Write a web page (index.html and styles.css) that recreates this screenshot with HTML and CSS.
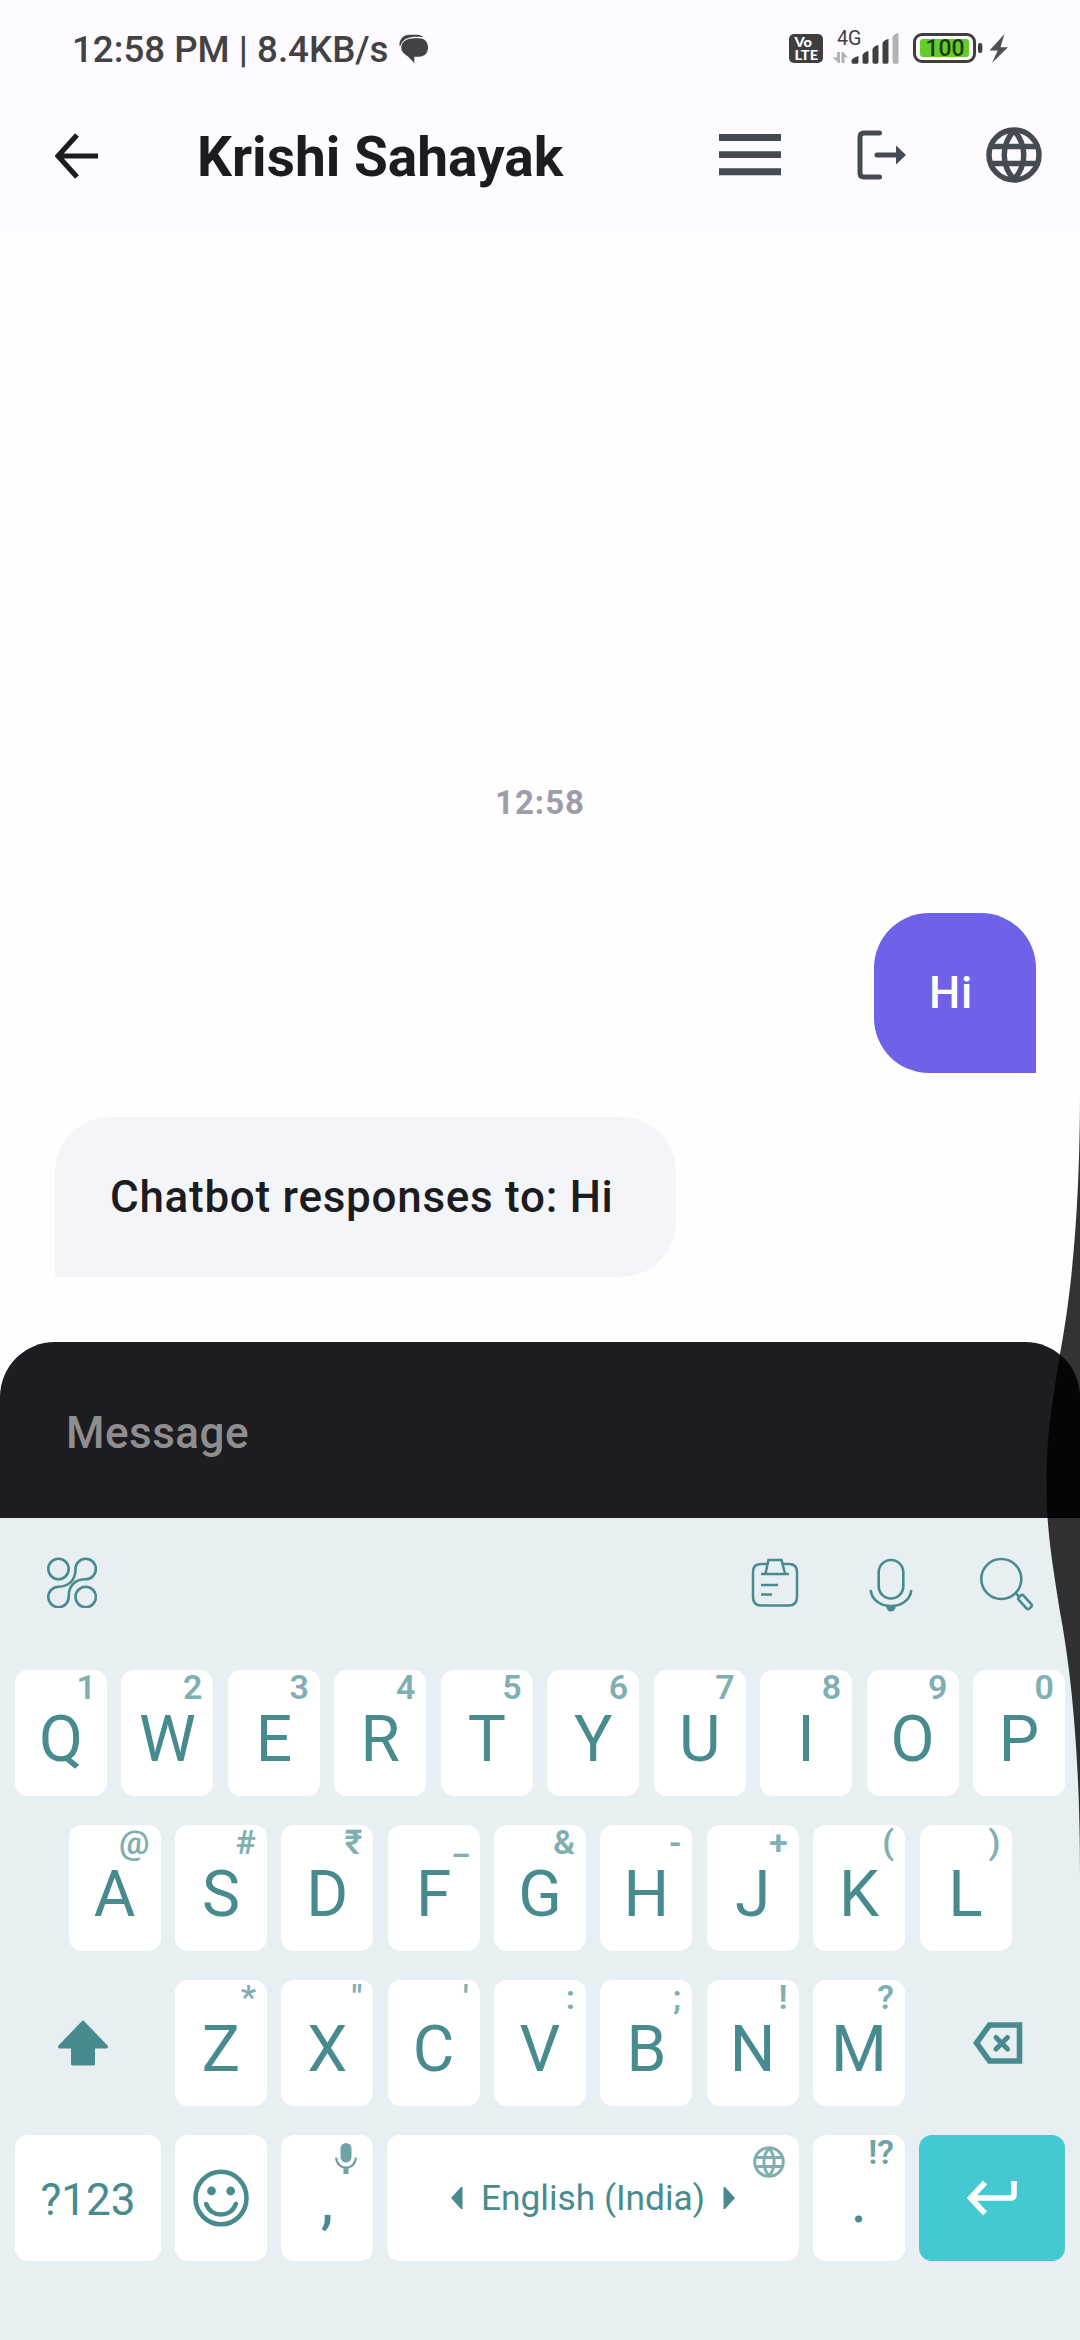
FILE: index.html
```html
<!DOCTYPE html>
<html lang="en">
<head>
<meta charset="utf-8">
<title>Krishi Sahayak</title>
<link rel="stylesheet" href="styles.css">
</head>
<body>
<div class="screen">
  <header class="top">
    <div class="status">
      <span class="status-text">12:58 PM | 8.4KB/s</span>
      <svg class="status-chat" width="30" height="30" viewBox="0 0 30 30"><path fill="#424242" d="M15.500 4.200H20C26 4.200 29 8.500 29 13.500 29 19 25.500 22.800 20 22.800H15.300V29L9 22.500C5 20 2.300 17.500 2.300 13.500 2.300 7.500 8 4.200 15.500 4.200Z"/><path fill="#424242" d="M0.500 12C0 7 3 .8 10.500 .8H18c3 0 5 1 6.500 2.500C14 2 4.500 3 1.600 11.500Z"/></svg>
      <svg class="status-icons" width="240" height="60" viewBox="0 0 240 60">
        <rect x="9" y="14" width="34" height="29" rx="5" fill="#3f3f3f"/>
        <text x="14.500" y="27.300" class="volte" textLength="17.500" lengthAdjust="spacingAndGlyphs">Vo</text>
        <text x="14.500" y="39.800" class="volte" textLength="23.500" lengthAdjust="spacingAndGlyphs">LTE</text>
        <text x="57" y="25" class="net" textLength="24.500" lengthAdjust="spacingAndGlyphs">4G</text>
        <path fill="#b3b1b4" d="M57 32h3v11h-1.500L52.500 37.500h4.500zM61.500 43V32h1.500l5 5.500h-3.500V43z"/>
        <path fill="#3f3f3f" d="M71.500 41c0-2 3-4 7-5v6q0 1.800-1.500 1.800h-4q-1.500 0-1.500-1.800zM82.500 35q2-3.500 6-4v11q0 1.800-1.500 1.800h-3q-1.500 0-1.500-1.800zM92.500 29q2-3.500 6-4v17q0 1.800-1.500 1.800h-3q-1.500 0-1.500-1.800zM102.500 23q2-3.500 6-4v23q0 1.800-1.500 1.800h-3q-1.500 0-1.500-1.800z"/>
        <path fill="#b3b1b4" d="M112.500 17q2-3.500 6-4v29q0 1.800-1.500 1.800h-3q-1.500 0-1.500-1.800z"/>
        <rect x="134.500" y="14.500" width="60" height="27" rx="7.500" fill="#fff" stroke="#3f3f3f" stroke-width="3"/>
        <rect x="140" y="19" width="49" height="18" rx="3" fill="#66cc2c"/>
        <rect x="198" y="23" width="4.300" height="10" rx="2" fill="#3f3f3f"/>
        <text x="145.500" y="36.300" class="batt" textLength="39" lengthAdjust="spacingAndGlyphs">100</text>
        <path fill="#505050" d="M224.500 14 209.500 30.500h8.200L212 43 228 27.300h-7.500z"/>
      </svg>
    </div>
    <div class="appbar">
      <svg class="back" width="44" height="46" viewBox="0 0 44 46"><path d="M22 2 3 23l19 21M3 23h40" fill="none" stroke="#1c1b1f" stroke-width="5.200"/></svg>
      <h1 class="title">Krishi Sahayak</h1>
      <svg class="menu" width="62" height="42" viewBox="0 0 62 42"><path fill="#464a53" d="M0 0h62v7H0zM0 17.200h62v6.800H0zM0 34.300h62v7H0z"/></svg>
      <svg class="logout" width="50" height="50" viewBox="0 0 50 50"><path d="M22.500 3H7Q3 3 3 7v36q0 4 4 4h15.500M20 25h20" fill="none" stroke="#464a53" stroke-width="5" stroke-linecap="round"/><path fill="#464a53" d="M39 16.500q0-1 1.200 0L49 25l-8.800 8.500Q39 35 39 33.500z"/></svg>
      <svg class="globe" width="56" height="56" viewBox="0 0 56 56"><g fill="none" stroke="#464a53" stroke-width="5.500"><circle cx="28" cy="28" r="25"/><path d="M4.500 19.500h47M4.500 36.500h47M28 3.500C15 18 15 38 28 52.500M28 3.500C41 18 41 38 28 52.500"/></g></svg>
    </div>
  </header>

  <main class="chat">
    <time class="stamp">12:58</time>
    <p class="bubble sent">Hi</p>
    <p class="bubble received">Chatbot responses to: Hi</p>
  </main>

  <div class="composer">Message</div>

  <section class="keyboard">
    <div class="tools">
      <svg width="50" height="51" viewBox="0 0 50 51" class="tool-more"><g fill="none" stroke="#478b8e" stroke-width="2.600"><circle cx="11.500" cy="12" r="10.200"/><circle cx="38.700" cy="40" r="10.200"/><path d="M28.500 12a10.200 10.200 0 1 1 10.200 10.200C28 22 21.500 29 21.700 40A10.200 10.200 0 1 1 11.500 29.800C22 29.500 28.500 23 28.500 12Z"/></g></svg>
      <svg width="48" height="50" viewBox="0 0 48 50" class="tool-clip"><g fill="none" stroke="#478b8e" stroke-width="2.500"><path d="M16 6h-6Q2 6 2 14v25q0 8.500 8 8.500h28q8 0 8-8.500V14q0-8-8-8h-6M10 16h28M14.500 15.500 17.500 2h13l3.500 13.500M10 27h17M10 36.500h11"/></g></svg>
      <svg width="44" height="54" viewBox="0 0 44 54" class="tool-mic"><g fill="none" stroke="#478b8e" stroke-width="2.600"><rect x="9.700" y="2" width="24.600" height="38.500" rx="12.300"/><path stroke-linecap="round" d="M1.800 33C5 53 39 53 42.200 33"/></g><path fill="#478b8e" d="M17 48h10q-1 5.500-5 5.500T17 48z"/></svg>
      <svg width="54" height="54" viewBox="0 0 54 54" class="tool-search"><g fill="none" stroke="#478b8e" stroke-width="2.600"><circle cx="21.300" cy="22" r="20"/><path d="M35 35.500l4 4"/><rect x="37.300" y="41.800" width="15.500" height="6.400" rx="2" transform="rotate(48 45 45)"/></g></svg>
    </div>

    <div class="row">
      <div class="key"><i>1</i>Q</div><div class="key"><i>2</i>W</div><div class="key"><i>3</i>E</div><div class="key"><i>4</i>R</div><div class="key"><i>5</i>T</div><div class="key"><i>6</i>Y</div><div class="key"><i>7</i>U</div><div class="key"><i>8</i>I</div><div class="key"><i>9</i>O</div><div class="key"><i>0</i>P</div>
    </div>
    <div class="row home">
      <div class="key"><i>@</i>A</div><div class="key"><i>#</i>S</div><div class="key"><i>₹</i>D</div><div class="key"><i>_</i>F</div><div class="key"><i>&amp;</i>G</div><div class="key"><i>-</i>H</div><div class="key"><i>+</i>J</div><div class="key"><i>(</i>K</div><div class="key"><i>)</i>L</div>
    </div>
    <div class="row edge">
      <div class="key ghost"><svg width="50" height="46" viewBox="0 0 50 46"><path fill="#478b8e" d="M25 0 49.500 25.500q1.500 3-1.500 3H37V44q0 1.500-1.500 1.500h-21Q13 45.500 13 44V28.500H2q-3 0-1.500-3z"/></svg></div>
      <div class="letters">
        <div class="key"><i>*</i>Z</div><div class="key"><i>"</i>X</div><div class="key"><i>'</i>C</div><div class="key"><i>:</i>V</div><div class="key"><i>;</i>B</div><div class="key"><i>!</i>N</div><div class="key"><i>?</i>M</div>
      </div>
      <div class="key ghost"><svg width="50" height="42" viewBox="0 0 50 42"><path d="M16.500 3H46.500v36H16.500L3.500 21z" fill="none" stroke="#478b8e" stroke-width="5.600"/><path d="M23 15.500l11.500 11.500M34.500 15.500 23 27" stroke="#478b8e" stroke-width="5" stroke-linecap="round"/></svg></div>
    </div>
    <div class="row">
      <div class="key wide symbols">?123</div>
      <div class="key icon"><svg width="56" height="58" viewBox="0 0 56 58"><g fill="none" stroke="#478b8e" stroke-width="4.600"><ellipse cx="28" cy="29" rx="25.500" ry="26.300"/><path stroke-linecap="round" d="M13.200 35C18 49 38 49 42.800 35"/></g><circle cx="18.500" cy="22" r="4.400" fill="#478b8e"/><circle cx="37.700" cy="22" r="4.400" fill="#478b8e"/></svg></div>
      <div class="key punct"><svg class="mini-mic" width="22" height="31" viewBox="0 0 22 31"><rect x="5.500" y="0" width="11" height="19.500" rx="5.500" fill="#6fa3a6"/><path d="M1.200 14.500C1.500 28 20.500 28 20.800 14.500" fill="none" stroke="#6fa3a6" stroke-width="2.200"/><path d="M8.500 24h5v7h-5z" fill="#6fa3a6"/></svg>,</div>
      <div class="key space">
        <svg width="12" height="22" viewBox="0 0 12 22"><path fill="#478b8e" d="M11.500 0v22H10L0 11 10 0z"/></svg>
        <span>English (India)</span>
        <svg width="12" height="22" viewBox="0 0 12 22"><path fill="#478b8e" d="M.5 0v22H2L12 11 2 0z"/></svg>
        <svg class="mini-globe" width="32" height="32" viewBox="0 0 56 56"><g fill="none" stroke="#80afb3" stroke-width="5.200"><circle cx="28" cy="28" r="25"/><path d="M4.500 20h47M4.500 36h47M28 3.500C16 18 16 38 28 52.500M28 3.500C40 18 40 38 28 52.500"/></g></svg>
      </div>
      <div class="key punct"><i class="strong">!?</i>.</div>
      <div class="key wide enter"><svg width="51" height="36" viewBox="0 0 51 36"><path d="M18 2.500 3.500 18 18 33.500M4 18h39.500q3.500 0 3.500-3.500V1" fill="none" stroke="#fff" stroke-width="5.600"/></svg></div>
    </div>
  </section>

  <svg class="edge-gesture" width="34" height="786" viewBox="1046 1090 34 786"><path fill="#000" fill-opacity=".8" d="M1080 1090C1080 1220 1070 1300 1060 1354 1052 1405 1046.500 1435 1046.500 1483 1046.500 1531 1052 1561 1060 1612 1070 1666 1080 1746 1080 1876Z"/></svg>
</div>
</body>
</html>
```

FILE: styles.css
```css
* { box-sizing: border-box; }

body {
  margin: 0;
  background: #fefefe;
  font-family: Roboto, "Noto Sans", sans-serif;
}

.screen {
  position: relative;
  display: flex;
  flex-direction: column;
  width: 1080px;
  height: 2340px;
  overflow: hidden;
}

svg { display: block; flex: none; }

/* header */
.top { height: 232px; background: #fdfbff; }

.status {
  display: flex;
  align-items: center;
  height: 80px;
  padding: 20px 60px 0 72px;
}

.status-text {
  width: 327px;
  font-size: 36.7px;
  font-weight: 500;
  line-height: 62px;
  color: #424242;
  white-space: nowrap;
}

.status-chat { margin-top: -2px; }
.status-icons { margin-left: auto; }

.volte { font: 900 13.5px Lato, sans-serif; fill: #fff; }
.net { font: 400 20px Roboto, sans-serif; fill: #3f3f3f; }
.batt { font: 500 23px Roboto, sans-serif; fill: #1c3a0c; }

.appbar {
  display: flex;
  align-items: center;
  height: 152px;
  padding: 0 38px 0 55px;
}

.back { margin-right: 98px; }

.title {
  width: 522px;
  margin: 1px 0 0;
  font-size: 55px;
  font-weight: 700;
  line-height: 80px;
  color: #1c1b1f;
  white-space: nowrap;
}

.menu { margin-right: 76px; }
.globe { margin-left: auto; }
.menu, .logout, .globe { margin-top: -2px; }

/* conversation */
.chat {
  display: flex;
  flex-direction: column;
  height: 1110px;
  padding: 545px 44px 0 55px;
}

.stamp {
  align-self: center;
  height: 50px;
  margin: 0 0 86px -11px;
  font-size: 33px;
  font-weight: 700;
  line-height: 51px;
  letter-spacing: 1px;
  color: #9e9cab;
}

.bubble {
  height: 159.5px;
  margin: 0 0 44.5px;
  padding: 0 55px;
  border-radius: 55px;
  font-size: 44px;
  font-weight: 500;
  line-height: 161px;
  letter-spacing: .72px;
}

.sent {
  align-self: flex-end;
  width: 162px;
  border-bottom-right-radius: 0;
  background: #6f61e8;
  color: #fff;
}

.received {
  align-self: flex-start;
  width: 621px;
  border-bottom-left-radius: 0;
  background: #f4f5f8;
  color: #1c1b1f;
  white-space: nowrap;
}

.composer {
  height: 176px;
  padding: 0 66px;
  border-radius: 55px 55px 0 0;
  background: #1d1c21;
  font-size: 44px;
  font-weight: 500;
  line-height: 182px;
  letter-spacing: .5px;
  color: #8e8e8f;
}

/* keyboard */
.keyboard {
  display: flex;
  flex-direction: column;
  gap: 29px;
  height: 822px;
  background: #e7eff3;
  color: #478b8e;
}

.tools {
  display: flex;
  align-items: flex-start;
  height: 123px;
  padding: 39px 46px 0 47px;
}

.tool-clip { margin: 1px 70px 0 auto; }
.tool-mic { margin: 1px 67px 0 0; }

.row {
  display: flex;
  justify-content: space-between;
  height: 126px;
  padding: 0 15px;
}

.row.home { padding: 0 68.5px; }

.letters { display: flex; justify-content: space-between; width: 730px; }

.key {
  position: relative;
  display: flex;
  align-items: center;
  justify-content: center;
  width: 92px;
  height: 126px;
  padding-top: 14px;
  border-radius: 13px;
  background: #fff;
  font-size: 64px;
  line-height: 64px;
}

.key i {
  position: absolute;
  top: 0;
  right: 11px;
  font-size: 34px;
  font-style: normal;
  font-weight: 600;
  line-height: 34px;
  color: #80afb3;
}

.key i.strong { color: #6fa3a6; }

.ghost {
  width: 135px;
  padding: 0 0 1px;
  border: 1px solid #ecf1f5;
  background: none;
}

.wide { width: 146px; }
.symbols { padding-top: 3px; font-size: 44px; }
.icon { padding: 0; }
.punct { padding-top: 6px; }

.space {
  gap: 18px;
  width: 412px;
  padding: 0;
  font-size: 35.3px;
}

.enter { padding: 0; background: #45c9d1; }

.mini-mic { position: absolute; top: 8px; right: 16px; }
.mini-globe { position: absolute; top: 11px; right: 14px; }

.edge-gesture { position: absolute; top: 1090px; right: 0; }
```
